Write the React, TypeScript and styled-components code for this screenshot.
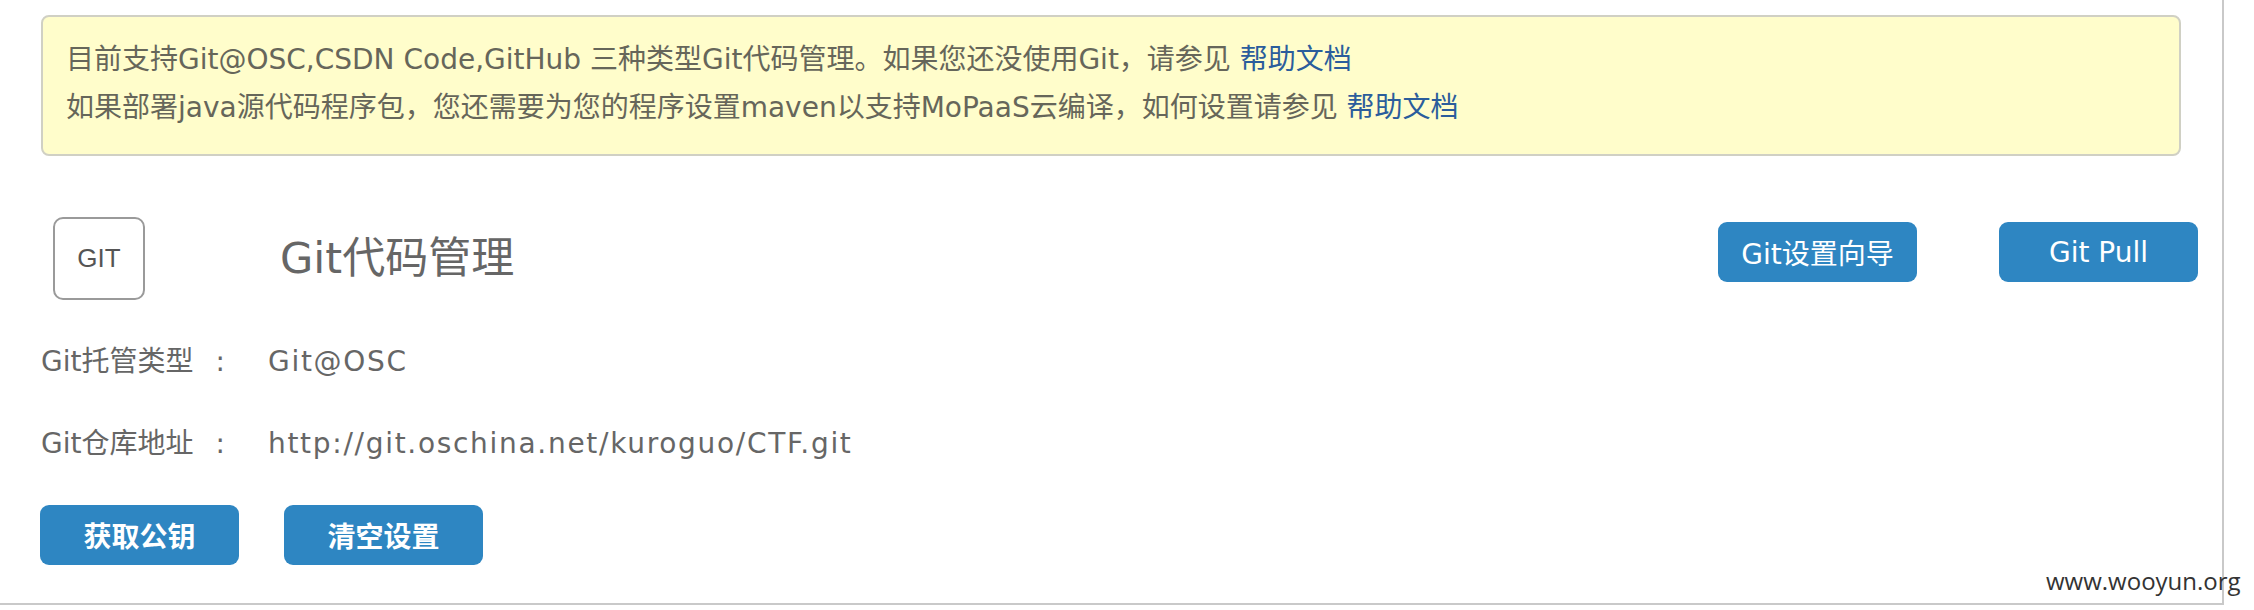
import { Fragment } from "react";
import styled, { createGlobalStyle } from "styled-components";

const GlobalStyle = createGlobalStyle`
  body {
    margin: 0;
    background: #fff;
    font-family: "DejaVu Sans", "Noto Sans CJK SC", sans-serif;
  }
`;

const Page = styled.div`
  position: relative;
  width: 2254px;
  height: 610px;
  overflow: hidden;
`;

const Panel = styled.div`
  box-sizing: border-box;
  width: 2224px;
  height: 605px;
  padding: 15px 24px 0 40px;
  border-right: 2px solid #c9c9c9;
  border-bottom: 2px solid #c9c9c9;
`;

const Notice = styled.div`
  margin: 0 17px 0 1px;
  padding: 19px 23px 22px;
  border: 2px solid #d0d0c4;
  border-radius: 8px;
  background: #fffdcb;
  color: #66665a;
  font-size: 28px;
  line-height: 48px;

  p {
    margin: 0;
  }
`;

const HelpLink = styled.a`
  color: #2b5d9c;
  text-decoration: none;
`;

const Header = styled.div`
  display: flex;
  align-items: center;
  margin-top: 61px;
`;

const GitBadge = styled.div`
  box-sizing: border-box;
  display: flex;
  align-items: center;
  justify-content: center;
  width: 92px;
  height: 83px;
  margin-left: 13px;
  border: 2px solid #9a9a9a;
  border-radius: 10px;
  color: #555;
  font-family: "Liberation Sans", sans-serif;
  font-size: 26px;
`;

const Title = styled.h2`
  margin: 0 0 0 135px;
  color: #666;
  font-size: 43px;
  font-weight: normal;
  line-height: 1;
`;

const Actions = styled.div`
  display: flex;
  gap: 82px;
  margin-left: auto;
  align-self: flex-start;
  margin-top: 5px;
`;

const Button = styled.button<{ $bold?: boolean }>`
  width: 199px;
  height: 60px;
  padding: 0;
  border: none;
  border-radius: 9px;
  background: #2e86c2;
  color: #fff;
  font-family: inherit;
  font-size: 28px;
  font-weight: ${(p) => (p.$bold ? "bold" : "normal")};
  cursor: pointer;
`;

const Fields = styled.dl`
  display: grid;
  grid-template-columns: 227px auto;
  row-gap: 34px;
  margin: 38px 0 0 1px;
  color: #666;
  font-size: 28px;
  line-height: 48px;

  dt,
  dd {
    margin: 0;
  }

  dd {
    letter-spacing: 1.7px;
  }
`;

const Colon = styled.span`
  padding-left: 22px;
`;

const Footer = styled.div`
  display: flex;
  gap: 45px;
  margin-top: 37px;
`;

const Watermark = styled.div`
  position: absolute;
  left: 2046px;
  top: 564px;
  color: #333;
  font-family: "Open Sans", sans-serif;
  font-size: 24px;
  line-height: 34px;
`;

const fields = [
  { label: "Git托管类型", value: "Git@OSC" },
  { label: "Git仓库地址", value: "http://git.oschina.net/kuroguo/CTF.git" },
];

const App = () => {
  return (
    <Page>
      <GlobalStyle />
      <Panel>
        <Notice>
          <p>
            目前支持Git@OSC,CSDN Code,GitHub 三种类型Git代码管理。如果您还没使用Git，请参见{" "}
            <HelpLink href="#">帮助文档</HelpLink>
          </p>
          <p>
            如果部署java源代码程序包，您还需要为您的程序设置maven以支持MoPaaS云编译，如何设置请参见{" "}
            <HelpLink href="#">帮助文档</HelpLink>
          </p>
        </Notice>
        <Header>
          <GitBadge>GIT</GitBadge>
          <Title>Git代码管理</Title>
          <Actions>
            <Button>Git设置向导</Button>
            <Button>Git Pull</Button>
          </Actions>
        </Header>
        <Fields>
          {fields.map((f) => (
            <Fragment key={f.label}>
              <dt>
                {f.label}
                <Colon>:</Colon>
              </dt>
              <dd>{f.value}</dd>
            </Fragment>
          ))}
        </Fields>
        <Footer>
          <Button $bold>获取公钥</Button>
          <Button $bold>清空设置</Button>
        </Footer>
      </Panel>
      <Watermark>www.wooyun.org</Watermark>
    </Page>
  );
};

export default App;
